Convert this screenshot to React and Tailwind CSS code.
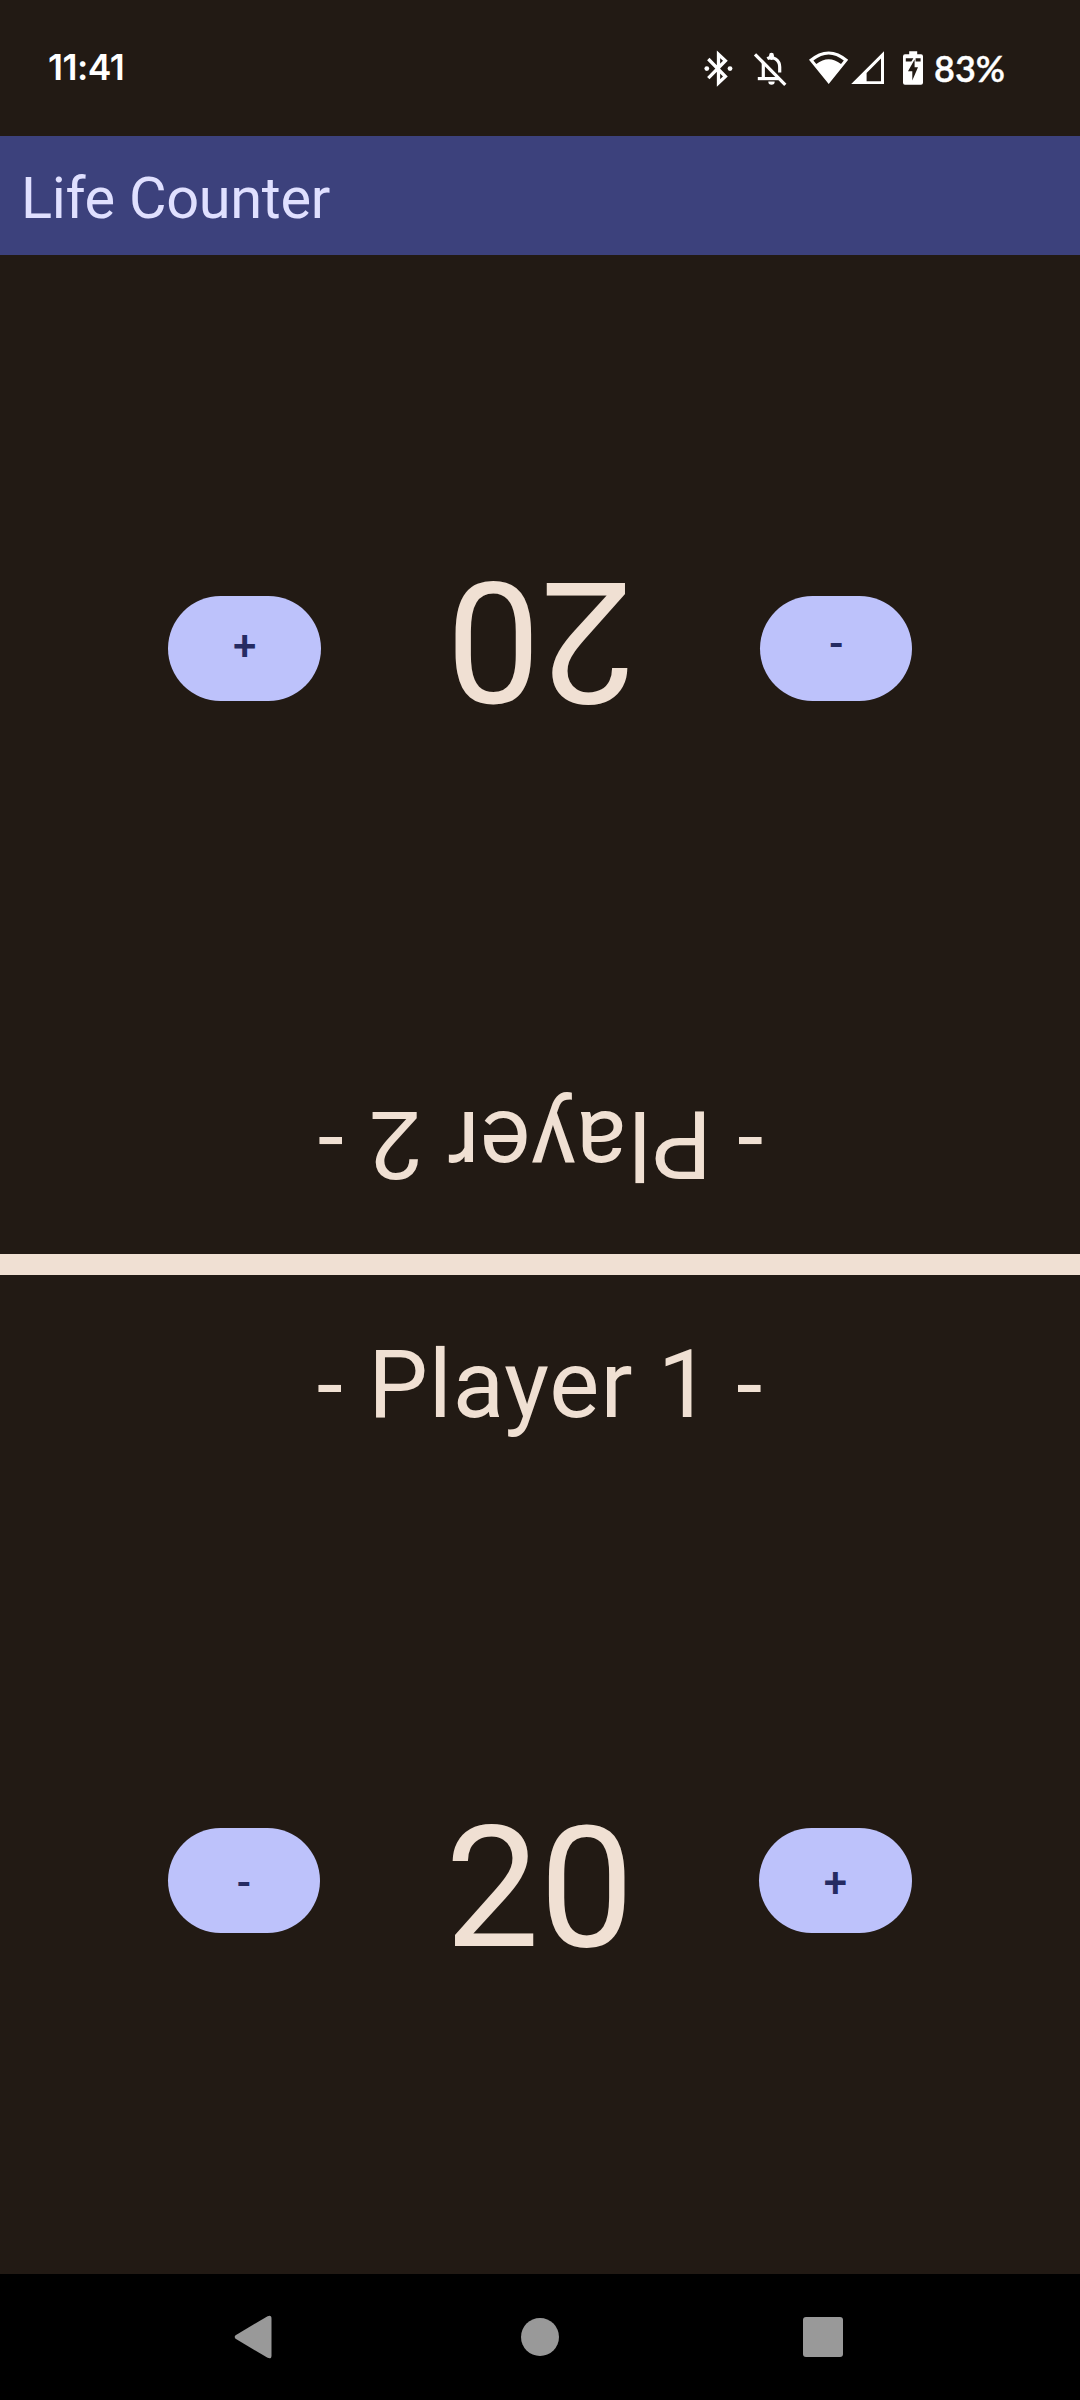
function BluetoothIcon() {
  return (
    <svg className="h-10 w-9 shrink-0" viewBox="700 48 36 40" fill="none" stroke="#fff" strokeWidth="3.3">
      <path d="M708.3 59 L725.4 76.5 L718.5 83 V54.2 L725.4 60.7 L708.3 78.2" />
      <circle cx="706.8" cy="68.6" r="2.4" fill="#fff" stroke="none" />
      <circle cx="730" cy="68.6" r="2.4" fill="#fff" stroke="none" />
    </svg>
  );
}

function BellOffIcon() {
  return (
    <svg className="h-10 w-9 shrink-0" viewBox="752 48 36 40" fill="none" stroke="#fff" strokeWidth="3.2">
      <path d="M755 54.3 L785.3 84.8" />
      <path d="M757.8 78.6 H778.5" />
      <path d="M763.3 63 V78" />
      <path d="M767.3 58.6 C773 55.5 779.7 60 779.7 67 V72.6" />
      <path d="M771.5 55.2 V57.5" strokeWidth="4.8" strokeLinecap="round" />
      <path d="M768.3 81.5 H774.7 A3.2 3.2 0 0 1 768.3 81.5 Z" fill="#fff" stroke="none" />
    </svg>
  );
}

function WifiIcon() {
  return (
    <svg className="h-10 w-[42px] shrink-0" viewBox="808 48 42 40">
      <path
        fill="#fff"
        fillRule="evenodd"
        d="M828.7 84 L809 59.8 Q828.7 43.3 848.2 59.8 Z M813.4 60.6 L816.3 64 Q828.7 54.5 841 64 L843.8 60.6 Q828.7 48.3 813.4 60.6 Z"
      />
    </svg>
  );
}

function SignalIcon() {
  return (
    <svg className="h-10 w-9 shrink-0" viewBox="850 48 36 40">
      <path
        fill="#fff"
        fillRule="evenodd"
        d="M851.2 84 L884 51.3 V84 Z M866.6 81.2 H881 V58.6 L866.6 73 Z"
      />
    </svg>
  );
}

function BatteryIcon() {
  return (
    <svg className="h-10 w-6 shrink-0" viewBox="901 48 24 40">
      <path
        fill="#fff"
        d="M909.2 51.2 H917.2 V54.3 H921 Q923 54.3 923 56.3 V82.7 Q923 84.7 921 84.7 H905 Q903 84.7 903 82.7 V56.3 Q903 54.3 905 54.3 H909.2 Z"
      />
      <path fill="#221a14" d="M905.8 58.2 H913.4 L911.4 61.6 H905.8 Z M915.6 58.2 H920.6 V61.6 H915.6 Z" />
      <path fill="#221a14" d="M914.6 59.5 V67.2 H918 L912.3 80.4 V71.2 H908 Z" />
    </svg>
  );
}

function StatusBar() {
  return (
    <div className="flex h-[136px] items-start pt-12 text-white">
      <div className="ml-12 h-10 w-[120px] font-['Inter',sans-serif] text-[35.5px] leading-10 font-semibold tracking-[-0.5px]">
        11:41
      </div>
      <div className="ml-auto flex items-start pr-[72px]">
        <BluetoothIcon />
        <div className="w-4" />
        <BellOffIcon />
        <div className="w-5" />
        <WifiIcon />
        <SignalIcon />
        <div className="w-[15px]" />
        <BatteryIcon />
        <div className="ml-[9px] h-10 w-[74px] font-['Lato',sans-serif] text-[36px] leading-10 font-semibold whitespace-nowrap [-webkit-text-stroke:0.4px_white]">
          83%
        </div>
      </div>
    </div>
  );
}

function LifeButton({ label, width }) {
  return (
    <button
      className={`flex h-[105px] items-center justify-center rounded-full bg-[#bdc2fb] pt-[6px] text-[42px] leading-[52px] font-medium text-[#252b62] ${width}`}
    >
      {label}
    </button>
  );
}

function PlayerPanel({ name, life, flipped }) {
  return (
    <section className={`flex h-[999px] flex-col items-center text-[#f0e0d3] ${flipped ? "rotate-180" : ""}`}>
      <h2 className="mt-[52px] h-[116px] text-[94.5px] leading-[116px] font-normal tracking-[0.95px] whitespace-pre">
        - {name} -
      </h2>
      <div className="mt-[337px] flex h-[200px] w-[744px] items-center">
        <LifeButton label="-" width="w-[152px]" />
        <div className="flex-1 pt-[18px] text-center text-[168px] leading-[200px]">{life}</div>
        <LifeButton label="+" width="w-[153px]" />
      </div>
    </section>
  );
}

function NavBar() {
  return (
    <nav className="flex h-[126px] items-center bg-black pl-[231px]">
      <svg className="h-[46px] w-[44px]" viewBox="231 2314 44 46">
        <path
          fill="#999"
          d="M235.6 2335.3 L267.6 2316.2 Q271.5 2314.6 271.5 2318.6 V2355.4 Q271.5 2359.4 267.6 2357.8 L235.6 2338.7 Q233.8 2337 235.6 2335.3 Z"
        />
      </svg>
      <div className="ml-[246px] size-[38px] rounded-full bg-[#999]" />
      <div className="ml-[244px] size-[40px] rounded-[3px] bg-[#999]" />
    </nav>
  );
}

export default function App() {
  return (
    <div className="flex h-[2400px] w-[1080px] flex-col overflow-hidden bg-[#221a14] font-['Roboto',sans-serif]">
      <StatusBar />
      <header className="flex h-[119px] items-center bg-[#3c417c] px-[21px] pt-[5px] text-[57.75px] leading-[73px] tracking-[-0.32px] text-[#e0e0ff]">
        Life Counter
      </header>
      <PlayerPanel name="Player 2" life={20} flipped />
      <div className="h-[21px] bg-[#f0e0d3]" />
      <PlayerPanel name="Player 1" life={20} />
      <NavBar />
    </div>
  );
}
